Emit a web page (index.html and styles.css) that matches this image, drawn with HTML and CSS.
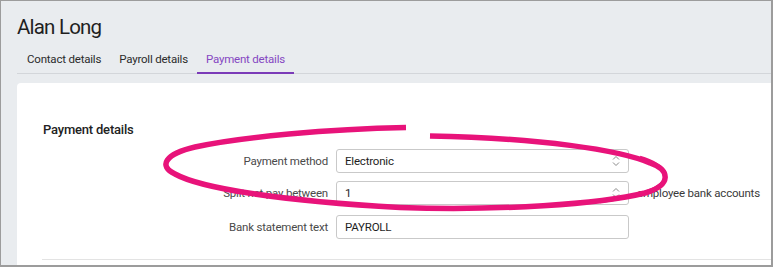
FILE: index.html
```html
<!DOCTYPE html>
<html lang="en">
<head>
<meta charset="utf-8">
<title>Alan Long - Payment details</title>
<link rel="stylesheet" href="styles.css">
</head>
<body>
<div class="frame">
  <header class="page-head">
    <h1 class="title">Alan Long</h1>
    <nav class="tabs">
      <a class="tab">Contact details</a>
      <a class="tab">Payroll details</a>
      <a class="tab tab-active">Payment details</a>
    </nav>
  </header>
  <section class="card">
    <h2 class="card-title">Payment details</h2>
    <div class="form">
      <div class="row row-1">
        <label class="label">Payment method</label>
        <div class="field select">
          <span class="value">Electronic</span>
          <svg class="chev" width="8" height="12" viewBox="0 0 8 12"><path d="M1 4.5 L4 1.5 L7 4.5 M1 7.5 L4 10.5 L7 7.5" fill="none" stroke="#8a8a8a" stroke-width="1"/></svg>
        </div>
      </div>
      <div class="row row-2">
        <label class="label">Split net pay between</label>
        <div class="field select">
          <span class="value">1</span>
          <svg class="chev" width="8" height="12" viewBox="0 0 8 12"><path d="M1 4.5 L4 1.5 L7 4.5 M1 7.5 L4 10.5 L7 7.5" fill="none" stroke="#8a8a8a" stroke-width="1"/></svg>
        </div>
        <span class="suffix">employee bank accounts</span>
      </div>
      <div class="row row-3">
        <label class="label">Bank statement text</label>
        <div class="field">
          <span class="value">PAYROLL</span>
        </div>
      </div>
    </div>
    <div class="divider"></div>
  </section>
  <svg class="annotation" width="773" height="267" viewBox="0 0 773 267">
    <path d="M406,127.5 C330,129 240,137 195,147 C165,154 158,166 175,174 C200,188 280,201 400,207.5 C500,211 600,204 645,193 C672,185 670,170 650,163 C620,150 540,138 430,136" fill="none" stroke="#e8137a" stroke-width="5.5" stroke-linecap="butt"/>
    <path d="M600,202 C642,196 670,186 665,172 C661,165 650,160 640,157" fill="none" stroke="#e8137a" stroke-width="2.5"/>
  </svg>
</div>
</body>
</html>
```

FILE: styles.css
```css
* { box-sizing: border-box; }
html, body { margin: 0; padding: 0; }
body {
  font-family: Roboto, "Open Sans", sans-serif;
  color: #222;
}
.frame {
  position: relative;
  width: 773px;
  height: 267px;
  overflow: hidden;
  background: #e9ecef;
  border-top: 1px solid #9c9c9c;
  border-left: 1px solid #9c9c9c;
  border-right: 2px solid #9c9c9c;
  border-bottom: 2px solid #9c9c9c;
}
.page-head {
  padding: 12px 0 0 16px;
}
.title {
  margin: 0;
  font-size: 20.5px;
  font-weight: 400;
  line-height: 28px;
  letter-spacing: -0.8px;
  color: #1f1f1f;
}
.tabs {
  display: flex;
  margin-top: 10px;
  padding-left: 1px;
  border-bottom: 1px solid #d3d6da;
}
.tab {
  display: block;
  padding: 0 9px 5px;
  font-size: 11.5px;
  line-height: 16px;
  letter-spacing: -0.2px;
  color: #2b2b2b;
  border-bottom: 2px solid transparent;
  margin-bottom: -1px;
}
.tab-active {
  color: #8547c2;
  border-bottom-color: #7b3bb8;
}
.card {
  margin: 9px 0 0 16px;
  background: #fff;
  border-top-left-radius: 4px;
  padding: 38px 0 0 25px;
  height: 200px;
}
.card-title {
  margin: 0 0 0 1px;
  font-size: 13px;
  font-weight: 500;
  line-height: 18px;
  letter-spacing: -0.2px;
  color: #222;
}
.form {
  margin-top: 10px;
}
.row {
  display: grid;
  grid-template-columns: 286px 293px auto;
  column-gap: 8px;
  align-items: center;
  letter-spacing: -0.2px;
}
.row-1 { margin-bottom: 8px; }
.row-2 { margin-bottom: 10px; }
.label {
  text-align: right;
  font-size: 11.5px;
  color: #4a4a4a;
}
.field {
  height: 24px;
  border: 1px solid #c9c9c9;
  border-radius: 3px;
  display: flex;
  align-items: center;
  justify-content: space-between;
  padding: 0 8px 0 8px;
  font-size: 11.5px;
  color: #1e1e1e;
}
.chev { display: block; }
.suffix {
  font-size: 11.5px;
  color: #3a3a3a;
}
.divider {
  margin-top: 20px;
  height: 1px;
  background: #e3e3e3;
}
.annotation {
  position: absolute;
  left: -1px;
  top: -1px;
  pointer-events: none;
}
```
